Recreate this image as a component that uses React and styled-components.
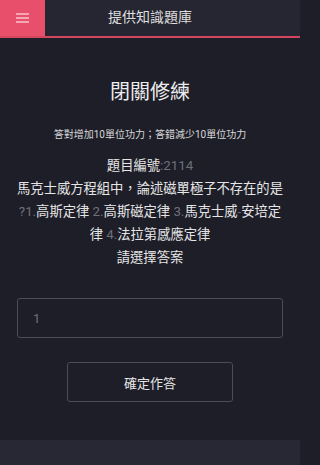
import React from 'react';
import styled, { createGlobalStyle } from 'styled-components';

const GlobalStyle = createGlobalStyle`
  * { box-sizing: border-box; }
  html, body { margin: 0; padding: 0; background: #1e1e28; }
  body {
    font-family: Roboto, "Noto Sans CJK TC", sans-serif;
    color: #e6e6e6;
    overflow: hidden;
  }
`;

function App() {
  return (
    <Page>
      <GlobalStyle />
      <Header>
        <MenuButton aria-label="menu">
          <Bars>
            <span />
            <span />
            <span />
          </Bars>
        </MenuButton>
        <HeaderTitle>提供知識題庫</HeaderTitle>
        <Spacer />
      </Header>
      <Main>
        <Title>閉關修練</Title>
        <Rule>答對增加10單位功力；答錯減少10單位功力</Rule>
        <Question>
          <Line>題目編號<Dim>:2114</Dim></Line>
          <Line>
            馬克士威方程組中，論述磁單極子不存在的是<wbr /><Dim>?1.</Dim>高斯定律 <Dim>2.</Dim>高斯磁定律 <Dim>3.</Dim>馬克士威<Dim>-</Dim>安培定律 <Dim>4.</Dim>法拉第感應定律
          </Line>
          <Line>請選擇答案</Line>
        </Question>
        <AnswerInput placeholder="1" />
        <SubmitButton>確定作答</SubmitButton>
      </Main>
      <Footer />
    </Page>
  );
}

export default App;

const Page = styled.div`
  width: 300px;
  height: 465px;
  display: flex;
  flex-direction: column;
  background: #1e1e28;
`;

const Header = styled.header`
  height: 38px;
  flex-shrink: 0;
  display: grid;
  grid-template-columns: 45px 1fr 45px;
  background: #262632;
  border-bottom: 2px solid #d2465f;
`;

const MenuButton = styled.div`
  background: #e84f6a;
  display: flex;
  align-items: center;
  justify-content: center;
`;

const Bars = styled.div`
  width: 13px;
  display: flex;
  flex-direction: column;
  gap: 2px;
  span {
    display: block;
    height: 2px;
    background: #f6a5b4;
  }
`;

const HeaderTitle = styled.div`
  line-height: 34px;
  text-align: center;
  font-size: 14px;
  color: #dedede;
`;

const Spacer = styled.div``;

const Main = styled.main`
  flex: 1;
  display: flex;
  flex-direction: column;
  align-items: center;
  padding: 40px 15px 0;
`;

const Title = styled.h1`
  margin: 0;
  font-size: 20px;
  line-height: 28px;
  font-weight: 400;
  color: #ececec;
`;

const Rule = styled.div`
  margin-top: 22px;
  font-size: 10px;
  line-height: 14px;
  color: #d8d8d8;
`;

const Question = styled.div`
  margin-top: 12px;
  width: 100%;
  text-align: center;
  font-size: 13.3px;
  line-height: 23px;
  color: #e6e6e6;
`;

const Line = styled.div``;

const Dim = styled.span`
  color: #6f6f7a;
`;

const AnswerInput = styled.input`
  margin-top: 29px;
  width: 266px;
  height: 40px;
  padding: 0 15px;
  background: transparent;
  border: 1px solid #4d4d58;
  border-radius: 3px;
  font-family: Roboto, sans-serif;
  font-size: 13px;
  color: #e6e6e6;
  outline: none;
  &::placeholder {
    color: #6f6f7a;
  }
`;

const SubmitButton = styled.button`
  margin-top: 24px;
  width: 166px;
  height: 40px;
  background: transparent;
  border: 1px solid #4d4d58;
  border-radius: 3px;
  font-family: Roboto, "Noto Sans CJK TC", sans-serif;
  font-size: 13px;
  color: #e6e6e6;
`;

const Footer = styled.footer`
  height: 25px;
  flex-shrink: 0;
  background: #282834;
`;
